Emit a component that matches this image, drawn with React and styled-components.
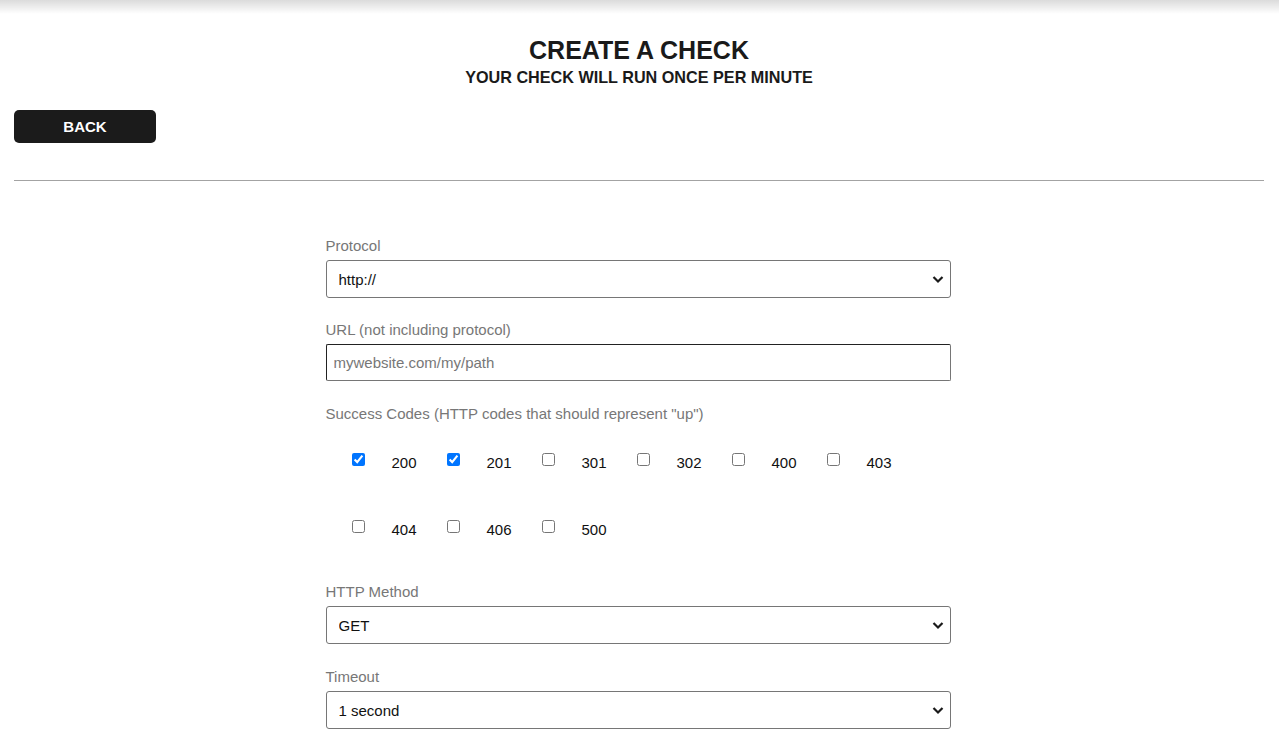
import React from 'react'
import styled, { createGlobalStyle } from 'styled-components'

const Global = createGlobalStyle`
  body {
    margin: 0;
    background: #fff;
    font-family: 'Liberation Sans', Arial, sans-serif;
    color: #111;
  }
`

const Shade = styled.div`
  height: 14px;
  background: linear-gradient(to bottom, rgba(0,0,0,0.14), rgba(0,0,0,0));
`

const Page = styled.div`
  padding: 0 15px 0 14px;
`

const Heading = styled.header`
  text-align: center;
  padding-top: 21px;
  h1 {
    margin: 0;
    font-size: 25px;
    line-height: 30px;
    font-weight: bold;
    color: #1a1a1a;
  }
  h2 {
    margin: 2px 0 0;
    font-size: 16.2px;
    line-height: 20px;
    font-weight: bold;
    color: #1a1a1a;
  }
`

const BackButton = styled.button`
  display: block;
  margin-top: 23px;
  width: 142px;
  height: 33px;
  border: none;
  border-radius: 5px;
  background: #1b1b1b;
  color: #fff;
  font-family: 'Liberation Sans', Arial, sans-serif;
  font-size: 15px;
  font-weight: bold;
  cursor: pointer;
`

const Rule = styled.hr`
  margin: 37px 0 0;
  border: none;
  border-top: 1px solid #a3a3a3;
`

const Form = styled.form`
  width: 625px;
  margin: 56px auto 0;
  position: relative;
  left: -1px;
  display: flex;
  flex-direction: column;
`

const Field = styled.div`
  display: flex;
  flex-direction: column;
  margin-bottom: ${p => p.$gap || 24}px;
`

const Label = styled.label`
  font-size: 15px;
  line-height: 17px;
  color: #777;
  margin-bottom: 6px;
`

const SelectWrap = styled.div`
  position: relative;
  svg {
    position: absolute;
    right: 6px;
    top: 15px;
    pointer-events: none;
  }
`

const Select = styled.select`
  width: 100%;
  height: 38px;
  appearance: none;
  border: 1px solid #767676;
  border-radius: 3px;
  padding: 0 12px;
  font-family: 'Liberation Sans', Arial, sans-serif;
  font-size: 15px;
  color: #111;
  background: #fff;
`

const TextInput = styled.input`
  height: 37px;
  box-sizing: border-box;
  border: 1px solid;
  border-color: #222 #767676 #767676 #222;
  border-radius: 2px;
  padding: 0 7px;
  font-family: 'Liberation Sans', Arial, sans-serif;
  font-size: 15px;
  &::placeholder {
    color: #777;
  }
`

const CodeGrid = styled.div`
  display: flex;
  flex-wrap: wrap;
  padding: 23px 0 0 26px;
  row-gap: 45px;
`

const Code = styled.label`
  width: 95px;
  display: flex;
  align-items: center;
  height: 22px;
  font-size: 15px;
  color: #111;
  input {
    margin: 0 27px 5px 0;
    width: 13px;
    height: 13px;
  }
`

const codes = [
  ['200', true], ['201', true], ['301', false], ['302', false], ['400', false],
  ['403', false], ['404', false], ['406', false], ['500', false],
]

function Dropdown({ defaultValue, children }) {
  return (
    <SelectWrap>
      <Select defaultValue={defaultValue}>{children}</Select>
      <svg width="14" height="9" viewBox="0 0 14 9">
        <path d="M2.5 2 L7 6.5 L11.5 2" fill="none" stroke="#1a1a1a" strokeWidth="2.2" />
      </svg>
    </SelectWrap>
  )
}

export default function App() {
  return (
    <>
      <Global />
      <Shade />
      <Page>
        <Heading>
          <h1>CREATE A CHECK</h1>
          <h2>YOUR CHECK WILL RUN ONCE PER MINUTE</h2>
        </Heading>
        <BackButton>BACK</BackButton>
        <Rule />
        <Form>
          <Field $gap={23}>
            <Label>Protocol</Label>
            <Dropdown defaultValue="http">
              <option value="http">http://</option>
              <option value="https">https://</option>
            </Dropdown>
          </Field>
          <Field $gap={24}>
            <Label>URL (not including protocol)</Label>
            <TextInput placeholder="mywebsite.com/my/path" />
          </Field>
          <Field $gap={43}>
            <Label>Success Codes (HTTP codes that should represent "up")</Label>
            <CodeGrid>
              {codes.map(([c, on]) => (
                <Code key={c}>
                  <input type="checkbox" defaultChecked={on} />
                  {c}
                </Code>
              ))}
            </CodeGrid>
          </Field>
          <Field $gap={24}>
            <Label>HTTP Method</Label>
            <Dropdown defaultValue="GET">
              <option>GET</option>
              <option>POST</option>
              <option>PUT</option>
              <option>DELETE</option>
            </Dropdown>
          </Field>
          <Field>
            <Label>Timeout</Label>
            <Dropdown defaultValue="1">
              <option value="1">1 second</option>
              <option value="2">2 seconds</option>
            </Dropdown>
          </Field>
        </Form>
      </Page>
    </>
  )
}
